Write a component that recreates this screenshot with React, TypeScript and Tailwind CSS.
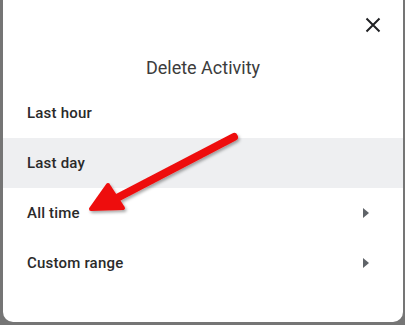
import React from "react";

const rows = [
  { label: "Last hour", arrow: false, active: false },
  { label: "Last day", arrow: false, active: true },
  { label: "All time", arrow: true, active: false },
  { label: "Custom range", arrow: true, active: false },
];

const Caret = () => (
  <svg width="6" height="10" viewBox="0 0 6 10">
    <path d="M0 0 L6 5 L0 10 Z" fill="#5f6368" />
  </svg>
);

export default function App() {
  return (
    <div className="w-[405px] h-[325px] bg-[#757575] flex items-start justify-start overflow-hidden">
      <div
        className="relative ml-[3px] w-[400px] h-[322px] bg-white rounded-b-[10px] flex flex-col"
        style={{ fontFamily: "Roboto, 'Noto Sans', sans-serif" }}
      >
        <div className="h-[46px] flex justify-end items-center pr-[22px] pt-[4px]">
          <svg width="16" height="16" viewBox="0 0 16 16">
            <path d="M1.5 1.5 L14.5 14.5 M14.5 1.5 L1.5 14.5" stroke="#202124" strokeWidth="2" />
          </svg>
        </div>
        <div className="h-[42px] flex justify-center items-center text-[18px] text-[#3c3c3c]">
          Delete Activity
        </div>
        <div className="flex flex-col">
          {rows.map((r) => (
            <div
              key={r.label}
              className={`h-[50px] flex items-center justify-between pl-[24px] pr-[34px] text-[15px] font-medium tracking-[0.2px] text-[#2a2a2a] ${
                r.active ? "bg-[#eeeff1]" : ""
              }`}
            >
              <span>{r.label}</span>
              {r.arrow && <Caret />}
            </div>
          ))}
        </div>
        <svg
          className="absolute left-0 top-0 pointer-events-none"
          width="400"
          height="322"
          viewBox="0 0 400 322"
        >
          <defs>
            <filter id="sh" x="-20%" y="-20%" width="140%" height="140%">
              <feDropShadow dx="1.5" dy="2" stdDeviation="1.5" floodColor="#000" floodOpacity="0.35" />
            </filter>
          </defs>
          <g filter="url(#sh)">
            <line x1="231" y1="137" x2="112" y2="199" stroke="#ee1111" strokeWidth="8" strokeLinecap="round" />
            <path d="M88 209 L105 185 L120 208 Z" fill="#ee1111" stroke="#ee1111" strokeWidth="4" strokeLinejoin="round" />
          </g>
        </svg>
      </div>
    </div>
  );
}
